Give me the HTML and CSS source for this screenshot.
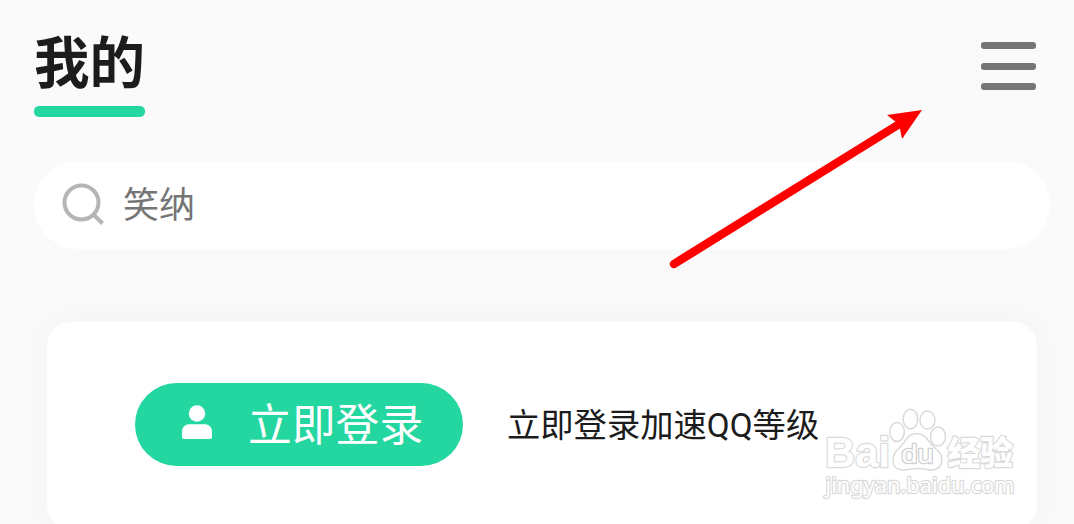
FILE: index.html
```html
<!DOCTYPE html>
<html lang="zh-CN">
<head>
    <meta charset="UTF-8">
    <meta name="viewport" content="width=device-width, initial-scale=1.0">
    <title>我的</title>
    <link rel="stylesheet" href="styles.css">
</head>
<body>
    <header class="header">
        <h1 class="title">我的</h1>
        <button class="menu" type="button" aria-label="菜单">
            <span></span>
            <span></span>
            <span></span>
        </button>
    </header>

    <div class="search">
        <svg class="search-icon" viewBox="0 0 44 44">
            <circle cx="19.5" cy="19.5" r="17"/>
            <path d="M31.5 31.5L40.5 40.5"/>
        </svg>
        <span>笑纳</span>
    </div>

    <section class="card">
        <button class="login" type="button">
            <svg class="user-icon" viewBox="0 0 32 34">
                <circle cx="16" cy="8.5" r="8.2"/>
                <path d="M7 19.3H25Q31 20.5 31 27V32Q31 34 29 34H3Q1 34 1 32V27Q1 20.5 7 19.3Z"/>
            </svg>
            <span>立即登录</span>
        </button>
        <p class="tip">立即登录加速QQ等级</p>
    </section>

    <svg class="arrow" viewBox="0 0 260 170">
        <path class="arrow-line" d="M9 164L236 23"/>
        <path class="arrow-head" d="M257 10L222 15L231 22L235 29L237 39Z"/>
    </svg>

    <svg class="watermark" viewBox="0 0 204 104">
        <text class="wm-brand" x="9" y="67" textLength="65" lengthAdjust="spacingAndGlyphs">Bai</text>
        <ellipse cx="81" cy="32" rx="7.3" ry="9.5"/>
        <ellipse cx="94.5" cy="19" rx="7.3" ry="9.8"/>
        <ellipse cx="111.5" cy="20" rx="7.5" ry="9"/>
        <ellipse cx="122" cy="36.5" rx="7.5" ry="9.5"/>
        <path d="M101 33.5C110 33.5 112 42 118 47C124 52 127 56 125.5 63C124 69 118 71 111 69.5C104 68 98 68 92 69.5C84 71 78 69 77 62C76 55 80 51 85 46C90 41 92 33.5 101 33.5Z"/>
        <text class="wm-du" x="85.5" y="63" textLength="32" lengthAdjust="spacingAndGlyphs">du</text>
        <text class="wm-cn" x="131.5" y="65" textLength="65.5" lengthAdjust="spacingAndGlyphs">经验</text>
        <text class="wm-url" x="9.5" y="93" textLength="189" lengthAdjust="spacingAndGlyphs">jingyan.baidu.com</text>
    </svg>
</body>
</html>
```
FILE: styles.css
```css
* {
    box-sizing: border-box;
}
body {
    margin: 0;
    padding: 25px 24px 0 34px;
    height: 524px;
    overflow: hidden;
    position: relative;
    background-color: #fafafa;
    font-family: Roboto, "Noto Sans CJK SC", sans-serif;
}
button {
    border: none;
    background: none;
    padding: 0;
    font-family: inherit;
    cursor: pointer;
}
.header {
    display: flex;
    justify-content: space-between;
    align-items: flex-start;
    height: 136px;
    padding-right: 14px;
}
.title {
    margin: 0;
    font-size: 55.5px;
    line-height: 80px;
    color: #1c1c1c;
}
.title::after {
    content: "";
    display: block;
    width: 111px;
    height: 11px;
    margin-top: 1px;
    border-radius: 5px;
    background-color: #24d6a0;
}
.menu {
    display: flex;
    flex-direction: column;
    justify-content: space-between;
    width: 55px;
    height: 48px;
    margin-top: 17px;
}
.menu span {
    height: 7px;
    border-radius: 3px;
    background-color: #757575;
}
.search {
    display: flex;
    align-items: center;
    gap: 17px;
    height: 88px;
    padding-left: 28px;
    border-radius: 44px;
    background-color: #fff;
    font-size: 36px;
    line-height: 50px;
    color: #757575;
}
.search span {
    padding-top: 2px;
}
.search-icon {
    width: 44px;
    height: 44px;
    fill: none;
    stroke: #b5b5b5;
    stroke-width: 4;
}
.card {
    display: flex;
    align-items: flex-start;
    gap: 44px;
    height: 207px;
    margin: 73px 13px 0;
    padding: 61px 88px;
    border-radius: 24px;
    background-color: #fff;
    box-shadow: 0 0 32px 4px rgba(0, 0, 0, 0.03);
}
.login {
    display: flex;
    align-items: center;
    gap: 35px;
    width: 328px;
    height: 83px;
    padding-left: 46px;
    border-radius: 42px;
    background-color: #24d6a0;
    color: #fff;
    font-size: 43.8px;
    line-height: 60px;
    white-space: nowrap;
}
.login span {
    padding-top: 2px;
}
.user-icon {
    width: 32px;
    height: 34px;
    margin-top: -5px;
    fill: #fff;
}
.tip {
    margin: 0;
    padding-top: 1px;
    font-size: 33.3px;
    line-height: 83px;
    color: #1c1c1c;
    white-space: nowrap;
}
.arrow {
    position: absolute;
    left: 665px;
    top: 100px;
    width: 260px;
    height: 170px;
}
.arrow-line {
    stroke: #f00;
    stroke-width: 8.5;
    stroke-linecap: round;
}
.arrow-head {
    fill: #f00;
}
.watermark {
    position: absolute;
    left: 816px;
    top: 400px;
    width: 204px;
    height: 104px;
    fill: #fff;
    stroke: #dadada;
    stroke-width: 1.5;
}
.watermark text {
    paint-order: stroke;
    stroke-width: 2.4;
    stroke-linejoin: round;
}
.wm-brand {
    font: bold 42px "Liberation Sans", sans-serif;
}
.watermark .wm-du {
    font: 26px "Liberation Sans", sans-serif;
    stroke: #d0d0d0;
}
.wm-cn {
    font: 900 33px "Noto Sans CJK SC", sans-serif;
}
.wm-url {
    font: 21.5px "Noto Sans", sans-serif;
}
```
